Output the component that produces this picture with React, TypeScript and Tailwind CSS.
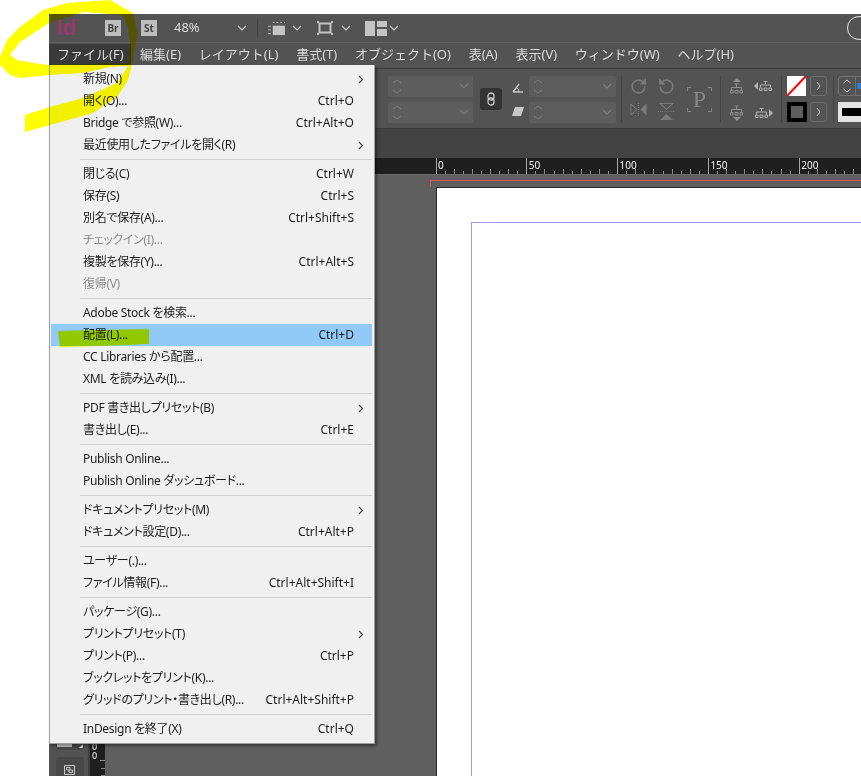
import { Fragment } from "react";

type Item = { label: string; shortcut?: string; sub?: boolean; disabled?: boolean; active?: boolean };

const menuGroups: Item[][] = [
  [
    { label: "新規(N)", sub: true },
    { label: "開く(O)...", shortcut: "Ctrl+O" },
    { label: "Bridge で参照(W)...", shortcut: "Ctrl+Alt+O" },
    { label: "最近使用したファイルを開く(R)", sub: true },
  ],
  [
    { label: "閉じる(C)", shortcut: "Ctrl+W" },
    { label: "保存(S)", shortcut: "Ctrl+S" },
    { label: "別名で保存(A)...", shortcut: "Ctrl+Shift+S" },
    { label: "チェックイン(I)...", disabled: true },
    { label: "複製を保存(Y)...", shortcut: "Ctrl+Alt+S" },
    { label: "復帰(V)", disabled: true },
  ],
  [
    { label: "Adobe Stock を検索..." },
    { label: "配置(L)...", shortcut: "Ctrl+D", active: true },
    { label: "CC Libraries から配置..." },
    { label: "XML を読み込み(I)..." },
  ],
  [
    { label: "PDF 書き出しプリセット(B)", sub: true },
    { label: "書き出し(E)...", shortcut: "Ctrl+E" },
  ],
  [{ label: "Publish Online..." }, { label: "Publish Online ダッシュボード..." }],
  [
    { label: "ドキュメントプリセット(M)", sub: true },
    { label: "ドキュメント設定(D)...", shortcut: "Ctrl+Alt+P" },
  ],
  [
    { label: "ユーザー(.)..." },
    { label: "ファイル情報(F)...", shortcut: "Ctrl+Alt+Shift+I" },
  ],
  [
    { label: "パッケージ(G)..." },
    { label: "プリントプリセット(T)", sub: true },
    { label: "プリント(P)...", shortcut: "Ctrl+P" },
    { label: "ブックレットをプリント(K)..." },
    { label: "グリッドのプリント・書き出し(R)...", shortcut: "Ctrl+Alt+Shift+P" },
  ],
  [{ label: "InDesign を終了(X)", shortcut: "Ctrl+Q" }],
];

const menuBar = ["編集(E)", "レイアウト(L)", "書式(T)", "オブジェクト(O)", "表(A)", "表示(V)", "ウィンドウ(W)", "ヘルプ(H)"];

function Chevron({ className }: { className?: string }) {
  return (
    <svg width="10" height="6" viewBox="0 0 10 6" fill="none" className={className}>
      <path d="M1 1l4 4 4-4" stroke="currentColor" strokeWidth="1.2" />
    </svg>
  );
}

function MenuRow({ item }: { item: Item }) {
  return (
    <div
      className={`flex h-[22px] items-center pl-[32px] ${item.active ? "bg-[#91c9f7]" : ""} ${
        item.disabled ? "text-[#8d8d8d]" : "text-[#1c1c1c]"
      }`}
    >
      <span className="flex-1 whitespace-nowrap tracking-[-0.3px] [font-feature-settings:'palt']">{item.label}</span>
      {item.shortcut && <span className="mr-[18px] whitespace-nowrap">{item.shortcut}</span>}
      {item.sub && (
        <svg width="6" height="9" viewBox="0 0 6 9" fill="none" className="mr-[8px] text-[#444]">
          <path d="M1 1l3.500 3.500L1 8" stroke="currentColor" strokeWidth="1.2" />
        </svg>
      )}
    </div>
  );
}

function SpinField({ width }: { width: string }) {
  return (
    <div className={`flex h-[21px] items-center justify-between rounded-[2px] bg-[#5d5d5d] pl-[4px] pr-[4px] ${width}`}>
      <svg width="10" height="17" viewBox="0 0 10 17" fill="none" className="text-[#7c7c7c]">
        <path d="M1 5l4-3 4 3M1 12l4 3 4-3" stroke="currentColor" strokeWidth="1" />
      </svg>
      <Chevron className="text-[#7c7c7c]" />
    </div>
  );
}

function TreeBody({ x }: { x: number }) {
  return (
    <g transform={`translate(${x} 0)`}>
      <path d="M6.500 0v3M1.500 6V3.500h10V6" stroke="currentColor" fill="none" />
      <path d="M4.500 0h4M.5 6.500h2.500v2.500H.5zM5 6.500h3v2.500H5zM10 6.500h2.500v2.500H10z" stroke="currentColor" fill="none" />
    </g>
  );
}

function TreeV({ dir }: { dir: "up" | "down" }) {
  return (
    <svg width="14" height="16" viewBox="0 0 14 16" className="text-[#8f8f8f]">
      {dir === "up" ? <path d="M7 0l4 4H3z" fill="currentColor" /> : <path d="M3 12h8l-4 4z" fill="currentColor" />}
      <g transform={dir === "up" ? "translate(0 6)" : "translate(0 1)"}>
        <TreeBody x={0} />
      </g>
    </svg>
  );
}

function TreeH({ dir }: { dir: "left" | "right" }) {
  return (
    <svg width="19" height="10" viewBox="0 0 19 10" className="text-[#b0b0b0]">
      {dir === "left" ? <path d="M4 1v8L0 5z" fill="currentColor" /> : <path d="M15 1v8l4-4z" fill="currentColor" />}
      <g transform="translate(0 0.500)">
        <TreeBody x={dir === "left" ? 5 : 1} />
      </g>
    </svg>
  );
}

function HorizontalRuler() {
  const ticks = Array.from({ length: 60 }, (_, i) => i);
  const labels = [0, 50, 100, 150, 200];
  return (
    <svg width="756" height="17" viewBox="0 0 756 17" className="block shrink-0 bg-[#1f1f1f]">
      {ticks.map((i) => {
        const x = Math.round(330.5 + i * 9.08) + 0.5;
        const major = i % 10 === 0;
        const mid = i % 2 === 0;
        return (
          <line key={i} x1={x} x2={x} y1={major ? 0 : mid ? 11 : 13} y2={16} stroke={major ? "#a8a8a8" : "#8a8a8a"} />
        );
      })}
      <line x1="0" x2="756" y1="16.500" y2="16.500" stroke="#6a6a6a" />
      {labels.map((v, i) => (
        <text key={v} x={333 + i * 90.8} y={11} fontSize="10" fill="#f2f2f2" fontFamily="Noto Sans, sans-serif">
          {v}
        </text>
      ))}
    </svg>
  );
}

export default function App() {
  return (
    <div className="relative h-[776px] w-[861px] overflow-hidden bg-white font-['Noto_Sans','Noto_Sans_CJK_JP',sans-serif] text-[12px]">
      <div className="flex h-full flex-col pl-[49px] pt-[14px]">
        {/* Title bar */}
        <div className="flex h-[29px] items-center border-b border-[#5f5f5f] bg-[#535353] text-[#dcdcdc]">
          <span className="ml-[8px] w-[18px] font-['Liberation_Sans',sans-serif] text-[22px] font-bold leading-none text-[#9b3866]">Id</span>
          <span className="ml-[30px] flex h-[16px] w-[16px] items-center justify-center bg-[#bdbdbd] text-[10px] font-bold text-[#444]">Br</span>
          <span className="ml-[20px] flex h-[16px] w-[16px] items-center justify-center bg-[#bdbdbd] text-[10px] font-bold text-[#444]">St</span>
          <span className="ml-[17px] w-[63px] text-[13px]">48%</span>
          <Chevron className="text-[#c8c8c8]" />
          <div className="ml-[10px] mr-[9px] h-[20px] w-[1px] bg-[#454545]" />
          <svg width="19" height="15" viewBox="0 0 20 16" className="text-[#c4c4c4]">
            <path d="M6 5h13v10H6z" fill="currentColor" />
            <path d="M1 5.500h3M1 9.500h3M1 13.500h3M6 1.500h2M10 1.500h2M14 1.500h2M18 1.500h1" stroke="currentColor" />
          </svg>
          <Chevron className="ml-[6px] text-[#c8c8c8]" />
          <svg width="16" height="14" viewBox="0 0 16 14" fill="none" className="ml-[15px] text-[#c4c4c4]">
            <path d="M2.500 2.500h11v9h-11z" stroke="currentColor" strokeWidth="2" />
            <path d="M0 0h2v2H0zM14 0h2v2h-2zM0 12h2v2H0zM14 12h2v2h-2z" fill="currentColor" />
          </svg>
          <Chevron className="ml-[8px] text-[#c8c8c8]" />
          <svg width="22" height="15" viewBox="0 0 22 15" className="ml-[14px] text-[#c4c4c4]">
            <path d="M0 0h10v15H0zM12 0h10v6H12zM12 8h10v7H12z" fill="currentColor" />
          </svg>
          <Chevron className="ml-[2px] text-[#c8c8c8]" />
          <div className="ml-auto mr-[-10px] h-[24px] w-[24px] rounded-full border border-[#e8e8e8]" />
        </div>

        {/* Menu bar */}
        <div className="flex h-[26px] items-center border-b border-[#3c3c3c] bg-[#535353] pb-[2px] text-[13px] text-[#dcdcdc]">
          <span className="mr-[9px] flex h-[22px] w-[82px] items-center bg-[#3a3a3a] pl-[8px]">ファイル(F)</span>
          <div className="flex gap-[17.75px]">
            {menuBar.map((m) => (
              <span key={m} className="whitespace-nowrap">{m}</span>
            ))}
          </div>
        </div>

        {/* Control bar */}
        <div className="flex h-[60px] items-center border-b border-[#3c3c3c] bg-[#535353] pt-[1px]">
          <div className="ml-[339px] flex flex-col gap-[5px]">
            <SpinField width="w-[85px]" />
            <SpinField width="w-[85px]" />
          </div>
          <div className="ml-[7px] flex h-[22px] w-[22px] items-center justify-center rounded-[3px] bg-[#333]">
            <svg width="8" height="14" viewBox="0 0 8 14" fill="none" className="text-[#c8c8c8]">
              <rect x="1" y="1" width="6" height="7" rx="3" stroke="currentColor" strokeWidth="1.300" />
              <rect x="1" y="6" width="6" height="7" rx="3" stroke="currentColor" strokeWidth="1.300" />
            </svg>
          </div>
          <div className="ml-[10px] flex w-[11px] flex-col items-center gap-[14px] text-[#c8c8c8]">
            <svg width="12" height="10" viewBox="0 0 12 10" fill="none">
              <path d="M1 9h10M1 9l6-8" stroke="currentColor" strokeWidth="1.300" />
              <path d="M5 5q2 1 2 4" stroke="currentColor" />
            </svg>
            <svg width="12" height="9" viewBox="0 0 12 9">
              <path d="M3 0h9L9 9H0z" fill="currentColor" />
            </svg>
          </div>
          <div className="ml-[6px] flex flex-col gap-[5px]">
            <SpinField width="w-[87px]" />
            <SpinField width="w-[87px]" />
          </div>
          <div className="ml-[5px] h-[46px] w-[1px] bg-[#454545]" />
          {/* rotate and flip */}
          <div className="ml-[8px] grid grid-cols-2 gap-x-[11px] gap-y-[8px] text-[#7a7a7a]">
            <svg width="17" height="17" viewBox="0 0 16 16" fill="none">
              <path d="M14 8a6 6 0 1 1-2-4.500" stroke="currentColor" strokeWidth="1.500" />
              <path d="M15 0v6H9z" fill="currentColor" />
            </svg>
            <svg width="17" height="17" viewBox="0 0 16 16" fill="none">
              <path d="M2 8a6 6 0 1 0 2-4.500" stroke="currentColor" strokeWidth="1.500" />
              <path d="M1 0v6h6z" fill="currentColor" />
            </svg>
            <svg width="17" height="13" viewBox="0 0 16 13" fill="none">
              <path d="M.500 1l6 5.500-6 5.500z" stroke="currentColor" />
              <path d="M16 .500L10 6.500l6 6z" fill="currentColor" />
              <path d="M8 0v13" stroke="currentColor" strokeDasharray="1 1" />
            </svg>
            <svg width="17" height="17" viewBox="0 0 16 16" fill="none">
              <path d="M2 .500h12L8 6z" stroke="currentColor" />
              <path d="M2 16h12L8 10z" fill="currentColor" />
              <path d="M0 8h16" stroke="currentColor" strokeDasharray="1 1" />
            </svg>
          </div>
          {/* P proxy */}
          <div className="relative ml-[12px] flex h-[25px] w-[25px] items-center justify-center font-['Liberation_Serif',serif] text-[24px] leading-none text-[#858585]">
            P
            <svg width="25" height="25" viewBox="0 0 25 25" fill="none" className="absolute inset-0">
              <path d="M.500 4V.500H4M21 .500h3.500V4M.500 21v3.500H4M21 24.500h3.500V21" stroke="#858585" />
            </svg>
          </div>
          <div className="ml-[8px] h-[46px] w-[1px] bg-[#454545]" />
          <div className="ml-[9px] grid grid-cols-[14px_19px] items-center gap-x-[10px] gap-y-[11px]">
            <TreeV dir="up" />
            <TreeH dir="left" />
            <TreeV dir="down" />
            <TreeH dir="right" />
          </div>
          <div className="ml-[8px] h-[46px] w-[1px] bg-[#454545]" />
          <div className="ml-[5px] grid grid-cols-[19px_17px] gap-x-[4px] gap-y-[6px]">
            <svg width="19" height="20" viewBox="0 0 19 20">
              <rect width="19" height="20" fill="#fff" />
              <path d="M19 0L0 20" stroke="#f00" strokeWidth="2" />
            </svg>
            <div className="flex h-[20px] items-center justify-center rounded-[3px] border border-[#6e6e6e] text-[#c8c8c8]">
              <svg width="5" height="8" viewBox="0 0 5 8" fill="none">
                <path d="M1 0l3 4-3 4" stroke="currentColor" />
              </svg>
            </div>
            <div className="h-[20px] w-[20px] border-[4px] border-black bg-[#5e5e5e]" />
            <div className="flex h-[20px] items-center justify-center rounded-[3px] border border-[#6e6e6e] text-[#c8c8c8]">
              <svg width="5" height="8" viewBox="0 0 5 8" fill="none">
                <path d="M1 0l3 4-3 4" stroke="currentColor" />
              </svg>
            </div>
          </div>
          <div className="ml-[6px] h-[46px] w-[1px] bg-[#454545]" />
          {/* Cut off by the window edge */}
          <div className="ml-[4px] flex min-w-0 flex-1 flex-col gap-[6px] overflow-hidden">
            <div className="flex h-[20px] w-[40px] items-center overflow-hidden rounded-[3px] border border-[#6e6e6e]">
              <svg width="16" height="16" viewBox="0 0 15 16" fill="none" className="shrink-0 text-[#c8c8c8]">
                <path d="M4 5l3.500-3L11 5M4 11l3.500 3 3.500-3" stroke="currentColor" />
              </svg>
              <div className="h-full w-[1px] bg-[#6e6e6e]" />
              <div className="ml-[1px] h-[6px] w-[6px] bg-[#2f7fd0]" />
            </div>
            <div className="flex h-[20px] w-[40px] items-center bg-[#e4e4e4] pl-[4px]">
              <div className="h-[8px] w-full bg-black" />
            </div>
          </div>
        </div>

        {/* Tab strip */}
        <div className="h-[29px] shrink-0 bg-[#434343]" />

        {/* Workspace */}
        <div className="flex min-h-0 flex-1 bg-[#5f5f5f]">
          <div className="flex w-[39px] shrink-0 flex-col items-center overflow-hidden bg-[#535353] pl-[2px] pt-[562px]">
            <div className="flex h-[30px] w-[28px] shrink-0 items-end justify-end rounded-[3px] bg-[#484848] p-[1px] pb-[2px]">
              <div className="mr-[7px] mb-[1px] h-[5px] w-[15px] bg-[#c8c8c8]" />
              <div className="h-0 w-0 border-b-[4px] border-l-[4px] border-b-[#dcdcdc] border-l-transparent" />
            </div>
            <div className="mt-[7px] flex h-[26px] w-[28px] shrink-0 items-center justify-center rounded-[3px] bg-[#484848]">
              <svg width="11" height="10" viewBox="0 0 11 10" fill="none" className="text-[#c8c8c8]">
                <path d="M.5.5h10v9H.5zM2.500 2.500h3.500v2.500H2.500zM5 5h3.500v2.500H5z" stroke="currentColor" />
              </svg>
            </div>
          </div>
          <div className="w-[2px] shrink-0 bg-[#3e3e3e]" />
          <div className="flex w-[15px] shrink-0 flex-col justify-end overflow-hidden bg-[#1f1f1f] text-[9px] leading-[9px] text-[#f2f2f2]">
            <div className="pl-[2px]">
              0
              <br />0
            </div>
            <svg width="15" height="16" viewBox="0 0 15 16" className="shrink-0 text-[#8a8a8a]">
              <path d="M10 .5h5M11 8.500h4M11 15.500h4" stroke="currentColor" />
            </svg>
          </div>
          <div className="flex min-w-0 flex-1 flex-col">
            <HorizontalRuler />
            <div className="min-h-0 flex-1 overflow-hidden pl-[325px] pt-[5px]">
              <div className="h-[7px] border-l border-t border-[#e04d60]" />
              <div className="ml-[6px] h-[600px] border-l border-t border-[#2a2a2a] bg-white pl-[34px] pt-[34px]">
                <div className="h-full border-l border-t border-[#9a9aff] border-l-[#c48ac4]" />
              </div>
            </div>
          </div>
        </div>
      </div>

      {/* Open File menu */}
      <div className="absolute left-[49px] top-[65px] w-[326px] border-r border-b border-l border-[#a0a0a0] bg-[#f0f0f0] py-[3px] pl-[1px] pr-[2px] shadow-[2px_2px_3px_rgba(0,0,0,0.4)]">
        {menuGroups.map((group, i) => (
          <Fragment key={i}>
            {i > 0 && (
              <div className="flex h-[7px] items-center pl-[29px]">
                <div className="h-[1px] w-full bg-[#d0d0d0]" />
              </div>
            )}
            {group.map((item) => (
              <MenuRow key={item.label} item={item} />
            ))}
          </Fragment>
        ))}
      </div>

      {/* Yellow marker annotations */}
      <svg width="861" height="776" viewBox="0 0 861 776" className="pointer-events-none absolute inset-0 mix-blend-multiply">
        <path
          fillRule="evenodd"
          fill="#ffff00"
          d="M25 115L50 107L83 98L117 83L128 66L110 67L83 73L49 75L20 78L10 75L0 65L0 57L7 40L20 27L43 10L67 3L110 0L133 13L137 33L133 60L128 80L117 97L93 113L25 132Z M10 55L20 42L49 23L83 12L123 15L128 27L130 43L129 63L49 65L33 63L17 60Z"
        />
        <path d="M58 331L100 330L149 329L149 344L100 346L60 347Z" fill="#ffff00" />
      </svg>
    </div>
  );
}
